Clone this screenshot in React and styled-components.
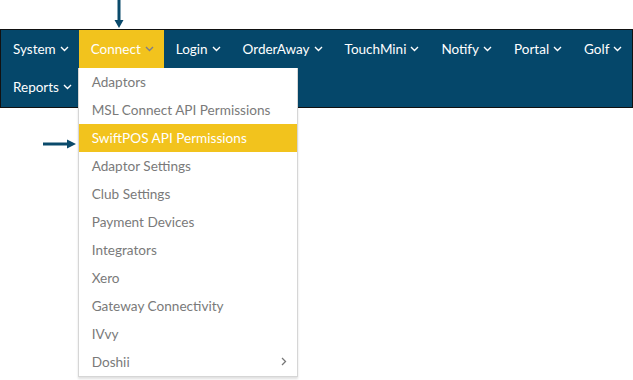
import React from 'react';
import styled, { createGlobalStyle } from 'styled-components';

const GlobalStyle = createGlobalStyle`
  body {
    margin: 0;
    background: #fff;
    font-family: Lato, "Noto Sans", sans-serif;
  }
`;

const Page = styled.div`
  position: relative;
  width: 633px;
  height: 380px;
  overflow: hidden;
`;

const TopMarker = styled.div`
  height: 29px;
  padding-left: 114px;
`;

const Navbar = styled.nav`
  display: flex;
  flex-direction: column;
  height: 77px;
  border: 1px solid #111;
  background-color: #05476a;
`;

const NavRow = styled.div`
  display: flex;
  height: 38px;
`;

const NavItem = styled.div`
  position: relative;
  display: flex;
  align-items: center;
  gap: 4px;
  height: 38px;
  padding: 0 10px 1px 12px;
  box-sizing: border-box;
  color: #fff;
  font-size: 13.5px;
  white-space: nowrap;
  background-color: ${(p) => (p.$active ? '#f2c31d' : 'transparent')};
`;

const Dropdown = styled.ul`
  position: absolute;
  top: 38px;
  left: -1px;
  width: 218px;
  margin: 0;
  padding: 0;
  list-style: none;
  background: #fff;
  border: 1px solid #d6d6d6;
  border-top: none;
  box-shadow: 0 2px 2px rgba(0, 0, 0, 0.12);
  z-index: 2;
`;

const DropItem = styled.li`
  display: flex;
  align-items: center;
  justify-content: space-between;
  height: 28px;
  box-sizing: border-box;
  padding: 0 10px 1px 13px;
  font-size: 13.6px;
  color: ${(p) => (p.$active ? '#fff' : '#7a7a7a')};
  background-color: ${(p) => (p.$active ? '#f2c31d' : 'transparent')};
`;

const SideMarker = styled.div`
  position: absolute;
  left: 43px;
  top: 133px;
`;

const Chevron = ({ color = '#fff' }) => (
  <svg width="9" height="6" viewBox="0 0 9 6">
    <polyline points="1,1 4.5,4.5 8,1" fill="none" stroke={color} strokeWidth="1.4" />
  </svg>
);

const Right = () => (
  <svg width="6" height="9" viewBox="0 0 6 9">
    <polyline points="1,1 4.5,4.5 1,8" fill="none" stroke="#777" strokeWidth="1.3" />
  </svg>
);

const connectItems = [
  'Adaptors',
  'MSL Connect API Permissions',
  'SwiftPOS API Permissions',
  'Adaptor Settings',
  'Club Settings',
  'Payment Devices',
  'Integrators',
  'Xero',
  'Gateway Connectivity',
  'IVvy',
  'Doshii',
];

const rows = [
  ['System', 'Connect', 'Login', 'OrderAway', 'TouchMini', 'Notify', 'Portal', 'Golf'],
  ['Reports'],
];

const App = () => (
  <Page>
    <GlobalStyle />
    <TopMarker>
      <svg width="10" height="29" viewBox="0 0 10 29">
        <line x1="5" y1="0" x2="5" y2="22" stroke="#0a4a6b" strokeWidth="3" />
        <polygon points="0.5,20 9.5,20 5,28" fill="#0a4a6b" />
      </svg>
    </TopMarker>
    <Navbar>
      {rows.map((row, i) => (
        <NavRow key={i}>
          {row.map((m) => (
            <NavItem key={m} $active={m === 'Connect'}>
              {m}
              <Chevron color={m === 'Connect' ? '#7d7d8c' : '#fff'} />
              {m === 'Connect' && (
                <Dropdown>
                  {connectItems.map((it) => (
                    <DropItem key={it} $active={it === 'SwiftPOS API Permissions'}>
                      {it}
                      {it === 'Doshii' && <Right />}
                    </DropItem>
                  ))}
                </Dropdown>
              )}
            </NavItem>
          ))}
        </NavRow>
      ))}
    </Navbar>
    <SideMarker>
      <svg width="34" height="10" viewBox="0 0 34 10">
        <line x1="0" y1="5" x2="26" y2="5" stroke="#0a4a6b" strokeWidth="3" />
        <polygon points="24,0.5 24,9.5 33,5" fill="#0a4a6b" />
      </svg>
    </SideMarker>
  </Page>
);

export default App;
